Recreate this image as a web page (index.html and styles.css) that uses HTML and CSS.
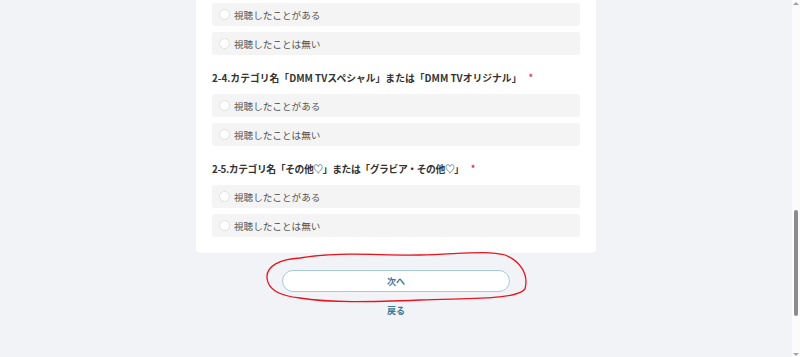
FILE: index.html
```html
<!DOCTYPE html>
<html lang="ja">
<head>
<meta charset="utf-8">
<link rel="stylesheet" href="styles.css">
</head>
<body>
<div class="page">
  <main class="main">
    <section class="card">
      <div class="options">
        <label class="option"><span class="radio"></span><span class="opt-text">視聴したことがある</span></label>
        <label class="option"><span class="radio"></span><span class="opt-text">視聴したことは無い</span></label>
      </div>
      <h3 class="question">2-4.カテゴリ名「DMM TVスペシャル」または「DMM TVオリジナル」<span class="req">*</span></h3>
      <div class="options">
        <label class="option"><span class="radio"></span><span class="opt-text">視聴したことがある</span></label>
        <label class="option"><span class="radio"></span><span class="opt-text">視聴したことは無い</span></label>
      </div>
      <h3 class="question question-tight">2-5.カテゴリ名「その他♡」または「グラビア・その他♡」<span class="req">*</span></h3>
      <div class="options">
        <label class="option"><span class="radio"></span><span class="opt-text">視聴したことがある</span></label>
        <label class="option"><span class="radio"></span><span class="opt-text">視聴したことは無い</span></label>
      </div>
    </section>
    <div class="actions">
      <button class="next-btn" type="button">次へ</button>
      <a class="back-link" href="#">戻る</a>
    </div>
  </main>
  <div class="scrollbar">
    <span class="arrow arrow-up"></span>
    <span class="track"><span class="thumb"></span></span>
    <span class="arrow arrow-down"></span>
  </div>
</div>
<svg class="annotation" width="800" height="357" viewBox="0 0 800 357">
  <path d="M 300 258 C 340 251, 380 256, 420 255 C 460 254, 488 250, 505 255 C 520 261, 529 274, 525 289 C 516 300, 470 298, 420 300 C 370 302, 330 303, 300 298 C 280 296, 268 290, 267 278 C 266 266, 280 259, 300 258 Z" fill="none" stroke="#e8141e" stroke-width="1.3"/>
</svg>
</body>
</html>
```

FILE: styles.css
```css
html, body {
  margin: 0;
  padding: 0;
}
body {
  width: 800px;
  height: 357px;
  overflow: hidden;
  background: #f2f3f7;
  font-family: "Noto Sans CJK JP", "Noto Sans", sans-serif;
  position: relative;
}
.page {
  display: flex;
  height: 357px;
}
.main {
  flex: 1;
  display: flex;
  flex-direction: column;
  align-items: center;
}
.card {
  width: 400px;
  box-sizing: border-box;
  background: #ffffff;
  border-radius: 0 0 5px 5px;
  padding: 3px 16px 16px 16px;
}
.options {
  display: flex;
  flex-direction: column;
  gap: 6px;
}
.option {
  height: 23px;
  box-sizing: border-box;
  background: #f4f4f4;
  border-radius: 3px;
  display: flex;
  align-items: center;
  padding-left: 7px;
  gap: 4px;
  overflow: hidden;
}
.radio {
  width: 9px;
  height: 9px;
  border-radius: 50%;
  background: #fff;
  border: 1px solid #e0e0e0;
  flex: none;
}
.opt-text {
  font-size: 9.6px;
  color: #555;
  line-height: 12px;
}
.question {
  margin: 15px 0 8px 0;
  height: 16px;
  display: flex;
  align-items: center;
  font-size: 9.8px;
  line-height: 16px;
  font-weight: bold;
  color: #333;
  white-space: nowrap;
}
.question-tight {
  letter-spacing: -0.4px;
}
.req {
  color: #d0306a;
  margin-left: 7px;
  font-size: 9px;
  line-height: 16px;
  letter-spacing: 0;
}
.actions {
  display: flex;
  flex-direction: column;
  align-items: center;
  margin-top: 17px;
}
.next-btn {
  width: 228px;
  height: 22px;
  box-sizing: border-box;
  border: 1px solid #a6cadb;
  border-radius: 11px;
  background: #fff;
  color: #3a7898;
  font-family: "Noto Sans CJK JP", sans-serif;
  font-weight: bold;
  font-size: 9px;
  padding: 0;
  line-height: 1;
}
.back-link {
  margin-top: 12px;
  font-size: 9px;
  line-height: 14px;
  font-weight: bold;
  color: #3a7898;
  text-decoration: none;
}
.scrollbar {
  width: 8px;
  background: #fbfbfb;
  display: flex;
  flex-direction: column;
  align-items: center;
}
.arrow {
  width: 0;
  height: 0;
  border-left: 3px solid transparent;
  border-right: 3px solid transparent;
  flex: none;
}
.arrow-up {
  border-bottom: 3px solid #a3a3a3;
  margin-top: 2px;
}
.arrow-down {
  border-top: 3px solid #a3a3a3;
  margin-bottom: 1px;
}
.track {
  flex: 1;
  width: 100%;
  display: flex;
  justify-content: center;
  padding-top: 205px;
}
.thumb {
  width: 4px;
  height: 106px;
  border-radius: 2px;
  background: #8c8c8c;
}
.annotation {
  position: absolute;
  left: 0;
  top: 0;
  pointer-events: none;
}
```
